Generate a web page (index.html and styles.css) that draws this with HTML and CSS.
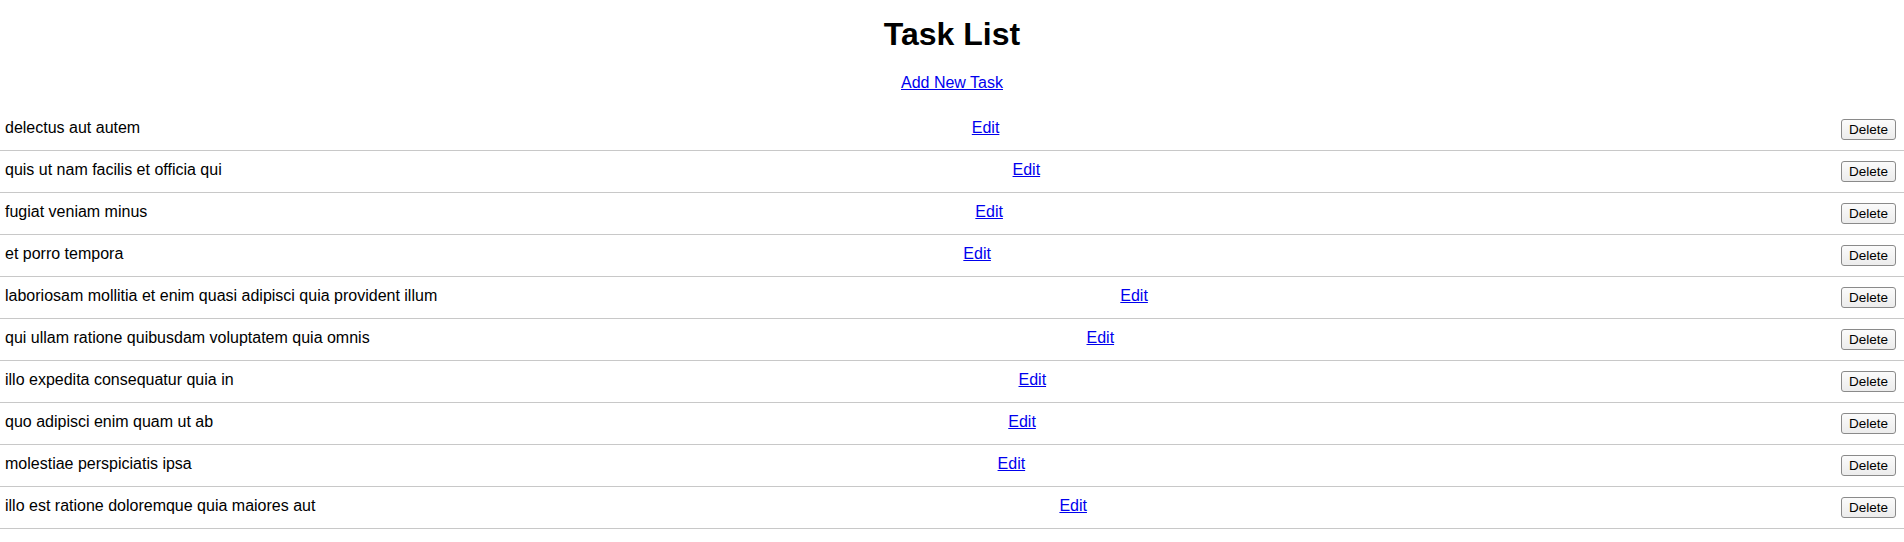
FILE: index.html
```html
<!DOCTYPE html>
<html>
<head>
<meta charset="utf-8">
<title>Task List</title>
<link rel="stylesheet" href="styles.css">
</head>
<body>
<h1 class="title">Task List</h1>
<p class="add"><a href="#">Add New Task</a></p>
<ul class="tasks">
  <li class="task"><span class="task-name">delectus aut autem</span><a class="edit" href="#">Edit</a><button class="delete">Delete</button></li>
  <li class="task"><span class="task-name">quis ut nam facilis et officia qui</span><a class="edit" href="#">Edit</a><button class="delete">Delete</button></li>
  <li class="task"><span class="task-name">fugiat veniam minus</span><a class="edit" href="#">Edit</a><button class="delete">Delete</button></li>
  <li class="task"><span class="task-name">et porro tempora</span><a class="edit" href="#">Edit</a><button class="delete">Delete</button></li>
  <li class="task"><span class="task-name">laboriosam mollitia et enim quasi adipisci quia provident illum</span><a class="edit" href="#">Edit</a><button class="delete">Delete</button></li>
  <li class="task"><span class="task-name">qui ullam ratione quibusdam voluptatem quia omnis</span><a class="edit" href="#">Edit</a><button class="delete">Delete</button></li>
  <li class="task"><span class="task-name">illo expedita consequatur quia in</span><a class="edit" href="#">Edit</a><button class="delete">Delete</button></li>
  <li class="task"><span class="task-name">quo adipisci enim quam ut ab</span><a class="edit" href="#">Edit</a><button class="delete">Delete</button></li>
  <li class="task"><span class="task-name">molestiae perspiciatis ipsa</span><a class="edit" href="#">Edit</a><button class="delete">Delete</button></li>
  <li class="task"><span class="task-name">illo est ratione doloremque quia maiores aut</span><a class="edit" href="#">Edit</a><button class="delete">Delete</button></li>
</ul>
</body>
</html>
```
FILE: styles.css
```css
html, body {
  margin: 0;
  padding: 0;
  background: #fff;
  color: #000;
  font-family: "Liberation Sans", Arial, Helvetica, sans-serif;
  font-size: 16px;
}

.title {
  font-size: 32px;
  font-weight: bold;
  text-align: center;
  margin: 16px 0 21px;
}

.add {
  text-align: center;
  margin: 21px 0 17px;
}

a {
  color: #0000ee;
  text-decoration: underline;
}

.tasks {
  list-style: none;
  margin: 0;
  padding: 0;
}

.task {
  display: flex;
  justify-content: space-between;
  padding: 10px 8px 10px 5px;
  border-bottom: 1px solid #c8c8c8;
}

.edit {
  margin-right: 10px;
}

.delete {
  font-family: "Liberation Sans", Arial, Helvetica, sans-serif;
  font-size: 13.5px;
  color: #000;
  background: linear-gradient(#fbfbfb, #ececec);
  border: 1px solid #8a8a8a;
  border-radius: 3px;
  padding: 2px 7px;
  margin: 0;
}
```
